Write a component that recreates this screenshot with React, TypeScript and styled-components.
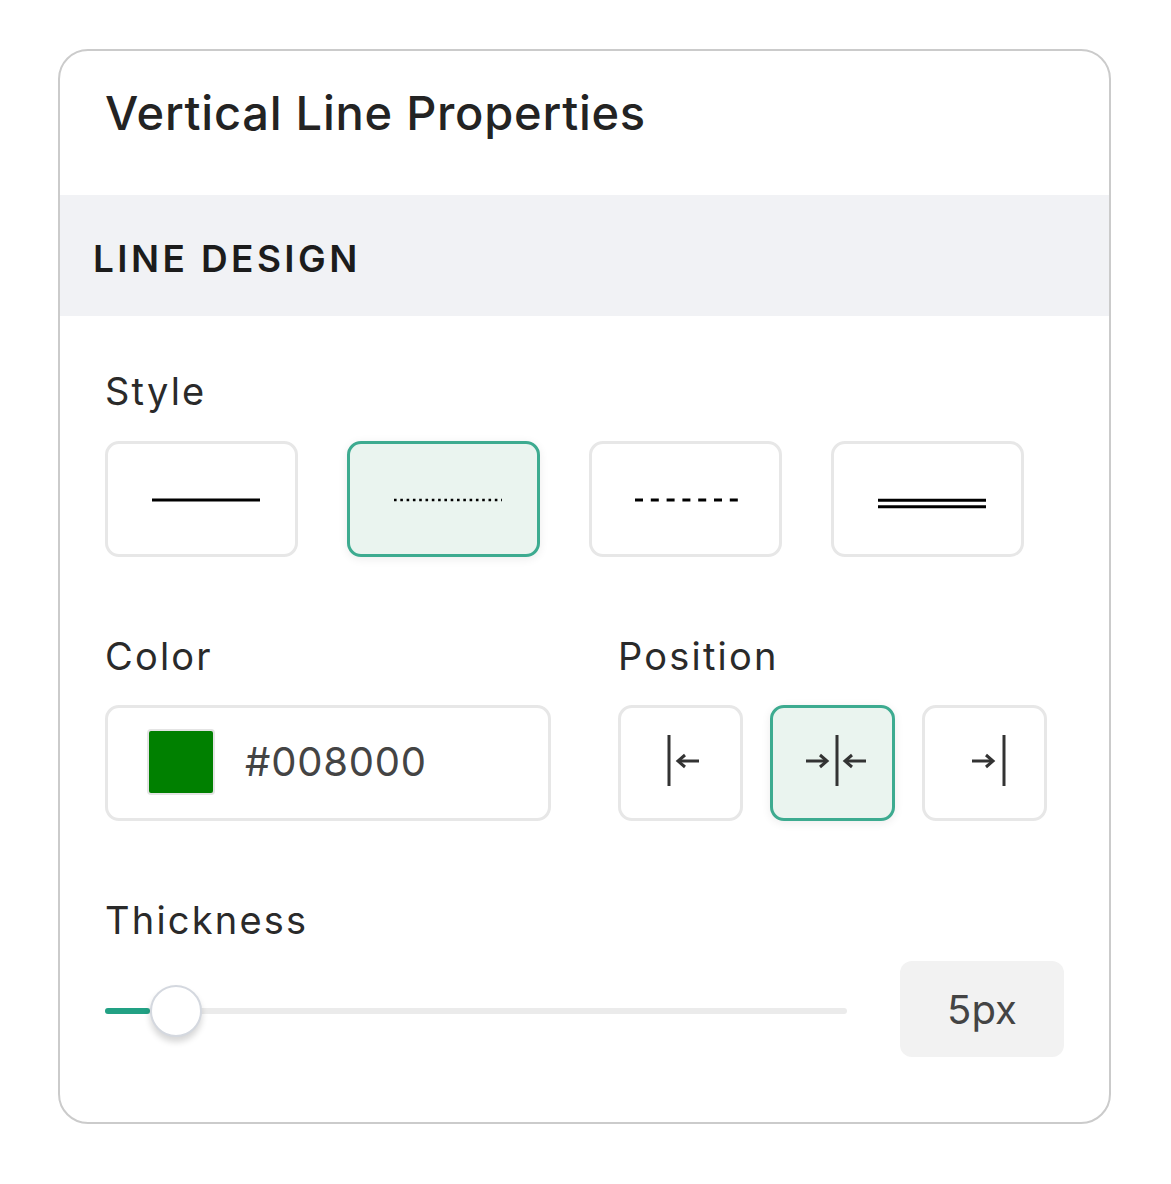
import React, { useState } from 'react';
import styled, { createGlobalStyle } from 'styled-components';

const GlobalStyle = createGlobalStyle`
  body {
    margin: 0;
    background: #ffffff;
    font-family: Inter, "Noto Sans", "Liberation Sans", sans-serif;
  }
`;

const Page = styled.div`
  padding: 49px 0 0 58px;
`;

const Card = styled.div`
  box-sizing: border-box;
  width: 1053px;
  border: 2px solid #cbcbcb;
  border-radius: 30px;
  overflow: hidden;
  background: #ffffff;
`;

const Header = styled.div`
  padding: 33px 45px 53px;
`;

const Title = styled.h1`
  margin: 0;
  font-size: 47px;
  line-height: 58px;
  font-weight: 500;
  color: #232323;
  letter-spacing: 0.75px;
`;

const SectionBand = styled.div`
  background: #f1f2f5;
  padding: 41px 33px 34px;
`;

const SectionTitle = styled.h2`
  margin: 0;
  font-size: 37px;
  line-height: 46px;
  font-weight: 600;
  color: #1c1c1c;
  letter-spacing: 3.4px;
`;

const Body = styled.div`
  padding: 52px 45px 63px;
  display: flex;
  flex-direction: column;
`;

const Field = styled.div<{ $gap?: number }>`
  display: flex;
  flex-direction: column;
  margin-bottom: ${({ $gap }) => ($gap ?? 0)}px;
`;

const Label = styled.div<{ $space?: number }>`
  font-size: 38px;
  line-height: 46px;
  color: #2a2a2a;
  letter-spacing: 2.2px;
  margin-bottom: ${({ $space }) => ($space ?? 26)}px;
`;

const StyleRow = styled.div`
  display: flex;
  gap: 49px;
`;

const OptionButton = styled.button<{ $active?: boolean; $w: number }>`
  box-sizing: border-box;
  width: ${({ $w }) => $w}px;
  height: 116px;
  padding: 0 0 0 8px;
  display: flex;
  align-items: center;
  justify-content: center;
  border-radius: 14px;
  border: 3px solid ${({ $active }) => ($active ? '#3dab90' : '#e7e7e7')};
  background: ${({ $active }) => ($active ? '#eaf4ef' : '#ffffff')};
  box-shadow: ${({ $active }) => ($active ? '0 2px 10px rgba(0, 0, 0, 0.08)' : 'none')};
  cursor: pointer;
`;

const TwoCol = styled.div`
  display: grid;
  grid-template-columns: 1fr 1fr;
  column-gap: 67px;
  margin-bottom: 76px;
`;

const ColorInput = styled.div`
  box-sizing: border-box;
  height: 116px;
  border: 3px solid #e7e7e7;
  border-radius: 14px;
  display: flex;
  align-items: center;
  padding-left: 39px;
  padding-bottom: 3px;
  gap: 30px;
`;

const Swatch = styled.div<{ $color: string }>`
  width: 64px;
  height: 62px;
  border-radius: 4px;
  background: ${({ $color }) => $color};
  border: 2px solid #e4e4e4;
`;

const HexText = styled.span`
  font-size: 40px;
  color: #444444;
  letter-spacing: 0.8px;
`;

const PositionRow = styled.div`
  display: flex;
  gap: 27px;
`;

const SliderRow = styled.div`
  display: flex;
  align-items: center;
  margin-top: -8px;
`;

const Track = styled.div`
  position: relative;
  flex: 1;
  height: 6px;
  border-radius: 3px;
  background: #ebebeb;
  margin-right: 53px;
  margin-top: 4px;
`;

const Fill = styled.div`
  position: absolute;
  left: 0;
  top: 0;
  bottom: 0;
  border-radius: 3px;
  background: #22a184;
`;

const Thumb = styled.div`
  position: absolute;
  top: 50%;
  width: 52px;
  height: 52px;
  margin-left: -26px;
  margin-top: -26px;
  box-sizing: border-box;
  border-radius: 50%;
  background: #ffffff;
  border: 2px solid #d4d8df;
  box-shadow: 0 5px 6px rgba(0, 0, 0, 0.16);
`;

const ValueBox = styled.div`
  width: 164px;
  height: 96px;
  border-radius: 12px;
  background: #f2f2f2;
  display: flex;
  align-items: center;
  justify-content: center;
  font-size: 40px;
  color: #444444;
`;

const CardFoot = styled.div`
  height: 2px;
`;

type LineKind = 'solid' | 'dotted' | 'dashed' | 'double';

const LinePreview = ({ kind }: { kind: LineKind }) => (
  <svg width="110" height="20" viewBox="0 0 110 20">
    {kind === 'solid' && <line x1="1" y1="11" x2="109" y2="11" stroke="#000" strokeWidth="3" />}
    {kind === 'dotted' && (
      <line x1="1" y1="11" x2="109" y2="11" stroke="#000" strokeWidth="2.5" strokeDasharray="2.6 3.7" />
    )}
    {kind === 'dashed' && (
      <line x1="0" y1="11" x2="110" y2="11" stroke="#000" strokeWidth="3" strokeDasharray="8 7.8" />
    )}
    {kind === 'double' && (
      <>
        <line x1="1" y1="11.2" x2="109" y2="11.2" stroke="#000" strokeWidth="3" />
        <line x1="1" y1="17.7" x2="109" y2="17.7" stroke="#000" strokeWidth="3" />
      </>
    )}
  </svg>
);

const ArrowRight = ({ x }: { x: number }) => (
  <g stroke="#333" strokeWidth="3" fill="none" strokeLinecap="butt" strokeLinejoin="miter">
    <line x1={x} y1="27" x2={x + 21} y2="27" />
    <polyline points={`${x + 14},21 ${x + 21},27 ${x + 14},33`} />
  </g>
);

const ArrowLeft = ({ x }: { x: number }) => (
  <g stroke="#333" strokeWidth="3" fill="none" strokeLinecap="butt" strokeLinejoin="miter">
    <line x1={x} y1="27" x2={x + 21} y2="27" />
    <polyline points={`${x + 7},21 ${x},27 ${x + 7},33`} />
  </g>
);

type Pos = 'left' | 'center' | 'right';

const PositionIcon = ({ pos }: { pos: Pos }) => {
  if (pos === 'left') {
    return (
      <svg width="36" height="58" viewBox="0 0 36 58">
        <line x1="2" y1="1" x2="2" y2="52" stroke="#333" strokeWidth="3" />
        <ArrowLeft x={11} />
      </svg>
    );
  }
  if (pos === 'right') {
    return (
      <svg width="36" height="58" viewBox="0 0 36 58">
        <ArrowRight x={1} />
        <line x1="33" y1="1" x2="33" y2="52" stroke="#333" strokeWidth="3" />
      </svg>
    );
  }
  return (
    <svg width="64" height="58" viewBox="0 0 64 58">
      <ArrowRight x={1} />
      <line x1="32" y1="1" x2="32" y2="52" stroke="#333" strokeWidth="3" />
      <ArrowLeft x={40} />
    </svg>
  );
};

const styles: LineKind[] = ['solid', 'dotted', 'dashed', 'double'];
const positions: Pos[] = ['left', 'center', 'right'];

export default function App() {
  const [lineKind, setLineKind] = useState<LineKind>('dotted');
  const [pos, setPos] = useState<Pos>('center');
  const thickness = 5;
  const pct = 9.6;

  return (
    <Page>
      <GlobalStyle />
      <Card>
        <Header>
          <Title>Vertical Line Properties</Title>
        </Header>
        <SectionBand>
          <SectionTitle>LINE DESIGN</SectionTitle>
        </SectionBand>
        <Body>
          <Field $gap={76}>
            <Label $space={27}>Style</Label>
            <StyleRow>
              {styles.map((k) => (
                <OptionButton key={k} $w={193} $active={k === lineKind} onClick={() => setLineKind(k)}>
                  <LinePreview kind={k} />
                </OptionButton>
              ))}
            </StyleRow>
          </Field>
          <TwoCol>
            <Field>
              <Label>Color</Label>
              <ColorInput>
                <Swatch $color="#008000" />
                <HexText>#008000</HexText>
              </ColorInput>
            </Field>
            <Field>
              <Label>Position</Label>
              <PositionRow>
                {positions.map((p) => (
                  <OptionButton key={p} $w={125} $active={p === pos} onClick={() => setPos(p)}>
                    <PositionIcon pos={p} />
                  </OptionButton>
                ))}
              </PositionRow>
            </Field>
          </TwoCol>
          <Field>
            <Label>Thickness</Label>
            <SliderRow>
              <Track>
                <Fill style={{ width: `${pct * 0.63}%` }} />
                <Thumb style={{ left: `${pct}%` }} />
              </Track>
              <ValueBox>{thickness}px</ValueBox>
            </SliderRow>
          </Field>
        </Body>
        <CardFoot />
      </Card>
    </Page>
  );
}
